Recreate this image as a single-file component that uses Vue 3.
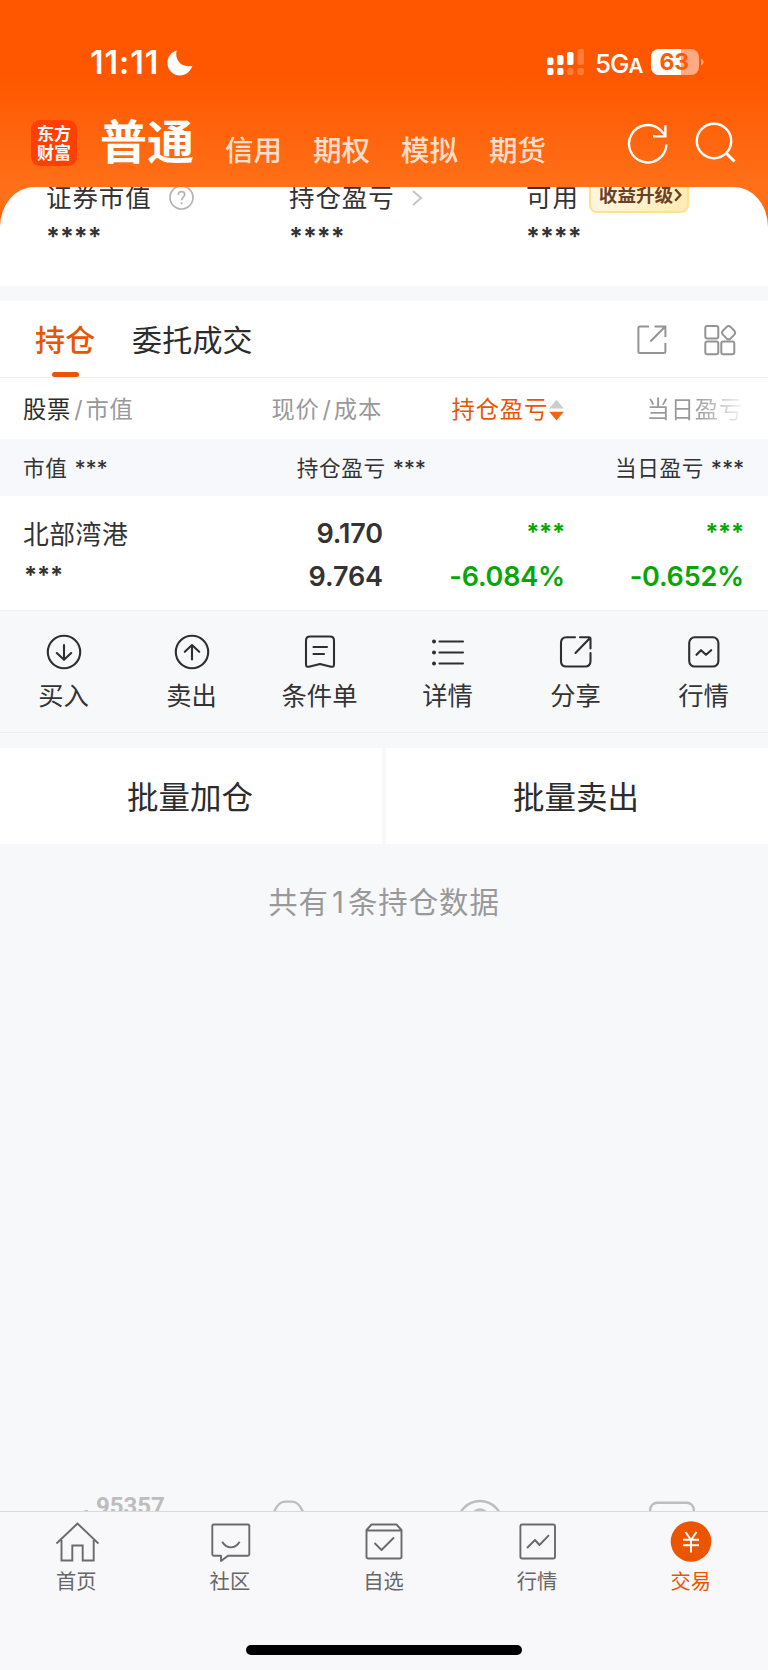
<script setup>
const modes = ['信用', '期权', '模拟', '期货']
const actions = [
  { id: 'buy', label: '买入' },
  { id: 'sell', label: '卖出' },
  { id: 'cond', label: '条件单' },
  { id: 'detail', label: '详情' },
  { id: 'share', label: '分享' },
  { id: 'quote', label: '行情' },
]
const tabs = [
  { id: 'home', label: '首页' },
  { id: 'community', label: '社区' },
  { id: 'watch', label: '自选' },
  { id: 'market', label: '行情' },
  { id: 'trade', label: '交易', active: true },
]
</script>

<template>
  <div class="screen">
    <header class="top">
      <div class="status">
        <span class="time">11:11</span>
        <svg class="moon" width="26" height="26" viewBox="0 0 26 26"><path d="M9.6 0.6C7.4 10.4 14.8 18.4 25.4 15.8C23.4 22 18.4 25.4 12.8 25.4C5.8 25.4 0.5 20 0.5 13C0.5 7.2 4 2.2 9.6 0.6Z" fill="#fff" /></svg>
        <svg class="signal" width="38" height="26" viewBox="0 0 38 26" fill="#fff">
          <rect x="0" y="8.5" width="6.5" height="7.5" rx="2" />
          <rect x="10" y="6" width="6.5" height="10" rx="2" />
          <rect x="20" y="3" width="6.5" height="13" rx="2" />
          <rect x="30.5" y="0" width="6.5" height="16" rx="2" opacity=".22" />
          <rect x="0" y="19" width="6.5" height="7" rx="2" />
          <rect x="10" y="19" width="6.5" height="7" rx="2" />
          <rect x="20" y="19" width="6.5" height="7" rx="2" opacity=".22" />
          <rect x="30.5" y="19" width="6.5" height="7" rx="2" opacity=".22" />
        </svg>
        <span class="net">5G<small>A</small></span>
        <svg class="battery" width="53" height="26" viewBox="0 0 53 26">
          <defs><clipPath id="bat"><rect width="48" height="26" rx="8" /></clipPath></defs>
          <g clip-path="url(#bat)"><rect width="48" height="26" fill="#ffaa80" /><rect width="30" height="26" fill="#fff" /></g>
          <path d="M50 9.5Q52.6 10.5 52.6 13T50 16.5Z" fill="#ffaa80" />
          <text x="23.3" y="21" text-anchor="middle" class="pct">63</text>
        </svg>
      </div>
      <nav class="modes">
        <div class="logo"><span>东方</span><span>财富</span></div>
        <h1>普通</h1>
        <div class="mode-list"><span v-for="m in modes" :key="m">{{ m }}</span></div>
        <svg class="refresh" width="42" height="42" viewBox="0 0 42 42" fill="none" stroke="#fff" stroke-width="2.4"><path d="M39.4 21.5A18.7 18.7 0 1 1 33.8 7.4L38 12M38.4 2.2V13.4H26" /></svg>
        <svg class="search" width="42" height="42" viewBox="0 0 42 42" fill="none" stroke="#fff" stroke-width="2.4"><circle cx="19" cy="19" r="17.2" /><path d="M30.8 30.8L39.5 39.5" stroke-width="3" /></svg>
      </nav>
    </header>

    <section class="asset">
      <div class="asset-col">
        <div class="asset-label">证券市值
          <svg class="help" width="25" height="25" viewBox="0 0 25 25" fill="none" stroke="#b4b4b4" stroke-width="1.7"><circle cx="12.5" cy="12.5" r="11.5" /><path d="M9.3 9.8C9.3 5.4 15.8 5.6 15.8 9.6C15.8 12 12.6 12.2 12.6 15.2M12.6 17.2V19.2" /></svg>
        </div>
        <div class="stars">****</div>
      </div>
      <div class="asset-col">
        <div class="asset-label">持仓盈亏
          <svg class="chev" width="12" height="18" viewBox="0 0 12 18" fill="none" stroke="#c4c4c4" stroke-width="2"><path d="M2 2L10 9L2 16" /></svg>
        </div>
        <div class="stars">****</div>
      </div>
      <div class="asset-col">
        <div class="asset-label">可用
          <span class="badge">收益升级<svg width="8" height="14" viewBox="0 0 8 14" fill="none" stroke="#6a4127" stroke-width="2.4"><path d="M1.2 1.2L6.4 7L1.2 12.8" /></svg></span>
        </div>
        <div class="stars">****</div>
      </div>
    </section>

    <section class="tabs">
      <span class="tab active">持仓</span>
      <span class="tab">委托成交</span>
      <svg class="open" width="30" height="30" viewBox="0 0 30 30" fill="none" stroke="#949494" stroke-width="2"><path d="M12 1.4H3Q1.4 1.4 1.4 3V26.5Q1.4 28 3 28H27Q28.4 28 28.4 26.5V18M17.5 1.4H28.4V12M28 1.8L13.4 16.5" /></svg>
      <svg class="grid-icon" width="33" height="32" viewBox="0 0 33 32" fill="none" stroke="#949494" stroke-width="2"><rect x="1.3" y="2" width="13" height="12.6" rx="2" /><rect x="1.3" y="17.6" width="13" height="12.6" rx="2" /><rect x="17.3" y="17.6" width="13" height="12.6" rx="2" /><path d="M22.6 2.9Q24.6 1 26.6 2.9L30.3 6.8Q32 8.7 30.3 10.6L26.6 14.4Q24.6 16.2 22.6 14.4L18.9 10.6Q17.2 8.7 18.9 6.8Z" /></svg>
    </section>

    <section class="cols heads">
      <div><b>股票</b><i>/</i>市值</div>
      <div class="r">现价<i>/</i>成本</div>
      <div class="r sorted"><span>持仓盈亏</span><svg width="15" height="22" viewBox="0 0 15 22"><path d="M7.5 0.8L14.8 9.6H0.2Z" fill="#ccc" /><path d="M7.5 21.4L14.8 12.8H0.2Z" fill="#fb6112" /></svg></div>
      <div class="r"><span class="fade">当日盈亏</span></div>
    </section>

    <section class="sum">
      <span>市值<em>***</em></span>
      <span>持仓盈亏<em>***</em></span>
      <span>当日盈亏<em>***</em></span>
    </section>

    <section class="cols stock">
      <div><p class="name">北部湾港</p><p class="mask">***</p></div>
      <div class="r num"><p>9.170</p><p>9.764</p></div>
      <div class="r num green"><p class="mask">***</p><p>-6.084%</p></div>
      <div class="r num green"><p class="mask">***</p><p>-0.652%</p></div>
    </section>

    <section class="actions">
      <div v-for="a in actions" :key="a.id" class="action">
        <svg width="36" height="36" viewBox="0 0 36 36" fill="none" stroke="#2f2f2f" stroke-width="2.1" stroke-linecap="round" stroke-linejoin="round">
          <g v-if="a.id === 'buy'"><circle cx="18" cy="18" r="16.2" /><path d="M18 11V25.5M10.8 19L18 25.8L25.2 19" /></g>
          <g v-else-if="a.id === 'sell'"><circle cx="18" cy="18" r="16.2" /><path d="M18 25.5V11M10.8 17.8L18 11L25.2 17.8" /></g>
          <path v-else-if="a.id === 'cond'" d="M8 2.5H28Q32 2.5 32 6.5V30.5Q32 33.2 29 32.7L18 30L7 32.7Q4 33.2 4 30.5V6.5Q4 2.5 8 2.5ZM11.5 13H25M11.5 20H22" />
          <g v-else-if="a.id === 'detail'"><path d="M9.5 7.5H33M9.5 18.5H33M9.5 29.5H33" /><path d="M4 7.5H4.01M4 18.5H4.01M4 29.5H4.01" stroke-width="4" /></g>
          <path v-else-if="a.id === 'share'" d="M17 3.3H8.5Q3 3.3 3 8.8V27.2Q3 32.5 8.5 32.5H27Q32.5 32.5 32.5 27V19M22 3.3H31Q32.5 3.3 32.5 5V14.5M32 4L17.5 19" />
          <g v-else><rect x="3.2" y="3.3" width="29.2" height="29.2" rx="5.5" /><path d="M10.5 20.8L15 16.2L20 20.8L25.2 16.2" /></g>
        </svg>
        <span>{{ a.label }}</span>
      </div>
    </section>

    <section class="batch"><button>批量加仓</button><button>批量卖出</button></section>
    <p class="total">共有<i>1</i>条持仓数据</p>

    <section class="peek">
      <div class="hotline"><svg width="6" height="4" viewBox="0 0 6 4"><path d="M0 4Q2.5 0 6 1.2V4Z" fill="#bdbdbd" /></svg><span>95357</span></div>
      <svg width="40" height="30" viewBox="0 0 40 30" fill="none" stroke="#bdbdbd" stroke-width="2.4"><path d="M3 19Q7.5 2.6 16 2.6H23Q31.5 2.6 36 19" /></svg>
      <svg width="46" height="30" viewBox="0 0 46 30" fill="none" stroke="#bdbdbd" stroke-width="2.4"><circle cx="23" cy="24" r="22" /><circle cx="23" cy="18.5" r="8" /></svg>
      <svg width="48" height="30" viewBox="0 0 48 30" fill="none" stroke="#bdbdbd" stroke-width="2.4"><rect x="2.2" y="3.7" width="43.6" height="40" rx="7" /></svg>
    </section>

    <footer class="bar">
      <div v-for="t in tabs" :key="t.id" class="bar-item" :class="{ on: t.active }">
        <svg width="44" height="44" viewBox="0 0 44 44" fill="none" stroke="#6a6a6a" stroke-width="1.9" stroke-linejoin="round">
          <path v-if="t.id === 'home'" d="M1.5 23.5L22.5 3.5L43.5 23.5M6.5 20V40.5H17.3V25.5H27.7V40.5H38.7V20" stroke-linejoin="miter" />
          <path v-else-if="t.id === 'community'" d="M5.8 4.5H39.8Q41.3 4.5 41.3 6V34.2Q41.3 35.7 39.8 35.7H20L13 41V35.7H5.8Q4.3 35.7 4.3 34.2V6Q4.3 4.5 5.8 4.5ZM14.2 21.8C18.4 29.2 27.4 29.2 31.6 21.8" />
          <path v-else-if="t.id === 'watch'" d="M9.5 4.5H34.5L39.5 10V36.7Q39.5 38.5 37.5 38.5H6.5Q4.5 38.5 4.5 36.7V10ZM4.5 10.5H39.5M12.5 23L19.5 30L32 17.5" />
          <path v-else-if="t.id === 'market'" d="M6.2 4.5H37.2Q39 4.5 39 6.3V36.7Q39 38.5 37.2 38.5H6.2Q4.4 38.5 4.4 36.7V6.3Q4.4 4.5 6.2 4.5ZM11 28L19 20L23.5 25L33 15.2" />
          <g v-else><circle cx="22" cy="21.5" r="20.3" fill="#ec5500" stroke="none" /><path d="M16.5 12L22 20L27.5 12M22 20V32.5M14 19.8H30M14 25.2H30" stroke="#fff" /></g>
        </svg>
        <span>{{ t.label }}</span>
      </div>
      <div class="home-ind"></div>
    </footer>
  </div>
</template>

<style>
body { background: #f7f8fa; }
</style>

<style scoped>
* { box-sizing: border-box; }
p, h1 { margin: 0; }
i, em { font-style: normal; }
svg { display: block; flex: none; }
.screen { width: 768px; height: 1670px; display: flex; flex-direction: column; background: #f7f8fa; font-family: Inter, "Noto Sans CJK SC", sans-serif; color: #333; overflow: hidden; white-space: nowrap; }
.top { height: 230px; margin-bottom: -43px; flex: none; background: linear-gradient(#ff5700 0, #ff5700 75px, #ff7018 187px, #ff7018 200px, #ff5700 230px); }
.status { height: 75px; padding: 49px 0 0 90px; display: flex; color: #fff; }
.time { width: 77px; font-size: 32px; line-height: 28px; font-weight: 600; letter-spacing: 1px; }
.moon { margin-top: 1px; }
.signal { margin-left: 354px; }
.net { margin-left: 10px; width: 56px; font-size: 26px; line-height: 29px; font-weight: 500; letter-spacing: -1px; }
.net small { font-size: 20.5px; font-weight: 600; }
.pct { font-size: 23px; font-weight: 700; fill: #ff5a08; }
.modes { height: 112px; padding-left: 31px; display: flex; color: #fff; }
.logo { width: 46px; height: 46px; margin-top: 45px; border-radius: 9px; background: #ff4000; display: flex; flex-direction: column; align-items: center; padding-top: 5px; }
.logo span { height: 19px; line-height: 19px; font-size: 17px; font-weight: 700; }
h1 { margin: 43px 0 0 23px; width: 125px; font-size: 47px; line-height: 48px; font-weight: 700; }
.mode-list { display: flex; margin-top: 61px; width: 402px; font-size: 28.5px; line-height: 30px; font-weight: 500; color: rgba(255,255,255,.8); }
.mode-list span { width: 88px; }
.refresh { margin: 48px 0 0 0; }
.search { margin: 47px 0 0 26px; }
.asset { height: 99px; flex: none; background: #fff; border-radius: 34px 34px 0 0 / 40px 40px 0 0; overflow: hidden; display: grid; grid-template-columns: 243px 237px 1fr; padding-left: 46px; }
.asset-label { display: flex; height: 24px; margin-top: -1px; align-items: center; font-size: 25.5px; letter-spacing: .9px; line-height: 24px; }
.help { margin: -2px 0 0 17px; }
.chev { margin: -1px 0 0 16px; }
.badge { margin: -7px 0 0 10px; width: 100px; height: 36px; border: 2px solid #ffe28a; border-radius: 8px; background: linear-gradient(90deg, #fff6e0, #ffebb4); display: flex; align-items: center; gap: 1px; padding: 1px 0 0 8px; font-size: 18.6px; font-weight: 700; letter-spacing: 0; color: #6a4127; }
.stars { margin-top: 12px; height: 30px; font-size: 25px; line-height: 30px; font-weight: 700; letter-spacing: -.1px; }
.tabs { height: 77px; margin-top: 15px; flex: none; background: #fff; border-bottom: 1px solid #efeff1; display: flex; padding-left: 35px; }
.tab { font-size: 30px; line-height: 78px; height: 76px; letter-spacing: .2px; color: #2c2c2c; }
.tab.active { width: 97px; color: #ea5504; font-weight: 500; display: flex; flex-direction: column; }
.tab.active::after { content: ""; width: 27px; height: 5px; border-radius: 3px; background: #ea5504; margin: -7px 0 0 17px; flex: none; }
.open { margin: 24px 0 0 384px; }
.grid-icon { margin: 23px 0 0 37px; }
.cols { display: grid; grid-template-columns: 216px 143px 182px 179px; padding: 0 24px; background: #fff; flex: none; }
.r { text-align: right; }
.heads { height: 61px; line-height: 64px; font-size: 23.3px; letter-spacing: .8px; color: #999; padding-left: 23px; padding-right: 25px; }
.heads b { font-weight: 400; color: #2c2c2c; }
.heads i { margin: 0 2px 0 3px; }
.sorted { display: flex; justify-content: flex-end; align-items: center; color: #ea5504; }
.sorted svg { margin: 0 0 0 1px; }
.fade { background: linear-gradient(90deg, #999 50%, rgba(153,153,153,.1) 100%); -webkit-background-clip: text; background-clip: text; color: transparent; }
.sum { height: 57px; flex: none; background: #f7f8fb; padding: 0 24px 0 23px; display: flex; justify-content: space-between; font-size: 21.6px; line-height: 58px; letter-spacing: .6px; }
.sum em { margin-left: 7px; font-weight: 500; letter-spacing: -.2px; }
.stock { height: 114px; padding-top: 15px; }
.stock p { height: 43px; line-height: 46px; }
.stock .name { font-size: 25.8px; letter-spacing: .5px; line-height: 48px; margin-left: -1px; }
.num { font-size: 27px; font-weight: 600; letter-spacing: -.1px; }
.green { color: #06a606; letter-spacing: -.2px; }
.stock .mask { font-size: 23.5px; font-weight: 700; letter-spacing: -.2px; line-height: 41px; }
.actions { height: 123px; flex: none; background: #f7f8fa; border-bottom: 1px solid #efeff1; border-top: 1px solid #f2f2f3; display: grid; grid-template-columns: repeat(6, 128px); }
.action { display: flex; flex-direction: column; align-items: center; padding-top: 23px; }
.action span { margin: 10px 1px 0 0; font-size: 25.3px; line-height: 32px; }
.batch { height: 96px; margin-top: 15px; flex: none; display: grid; grid-template-columns: 1fr 1fr; gap: 4px; }
.batch button { border: 0; background: #fff; padding: 3px 2px 0 0; color: #2c2c2c; font-family: inherit; font-size: 31.5px; line-height: 40px; }
.total { height: 60px; margin-top: 29px; text-align: center; font-size: 29.4px; line-height: 60px; color: #999; letter-spacing: 1px; }
.total i { margin: 0 3px; }
.peek { margin-top: auto; flex: none; height: 14px; overflow: hidden; display: flex; color: #bdbdbd; }
.peek > svg { margin-top: 2px; }
.peek > svg:nth-child(2) { margin-left: 105px; }
.peek > svg:nth-child(3) { margin-left: 148px; }
.peek > svg:nth-child(4) { margin-left: 145px; }
.hotline { width: 164px; display: flex; padding-left: 82px; }
.hotline svg { margin: 12px 8px 0 0; }
.hotline span { font-family: Roboto, sans-serif; font-size: 24px; line-height: 24px; height: 24px; font-weight: 700; margin-top: -3px; }
.bar { height: 159px; flex: none; border-top: 1px solid #d9dade; background: #f8f8fb; display: flex; flex-wrap: wrap; align-content: flex-start; }
.bar-item { width: 20%; height: 133px; padding-top: 8px; display: flex; flex-direction: column; align-items: center; }
.bar-item span { font-size: 20.3px; line-height: 28px; margin: 4px 1px 0 0; color: #666; }
.bar-item.on span { color: #ec5500; }
.home-ind { width: 276px; height: 10px; margin: 0 auto; border-radius: 5px; background: #000; }
</style>
